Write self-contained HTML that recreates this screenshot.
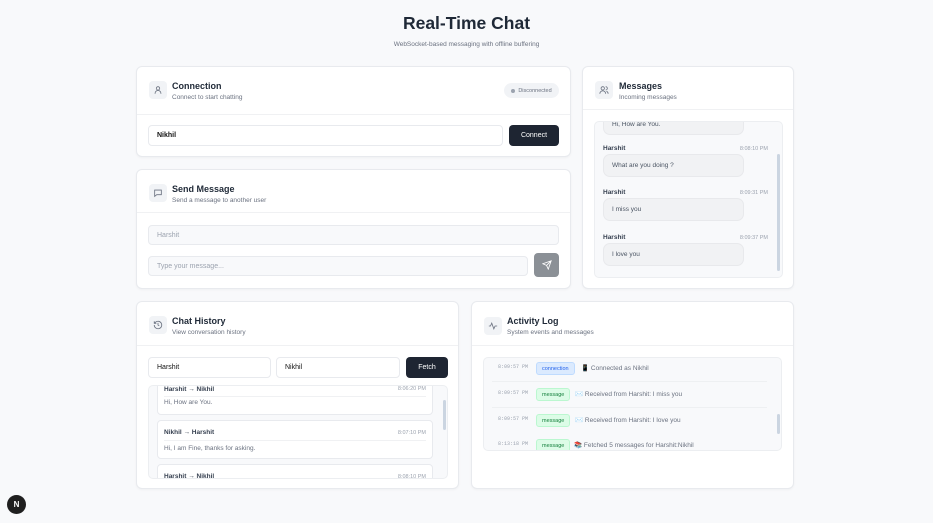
<!DOCTYPE html>
<html><head><meta charset="utf-8"><style>
*{box-sizing:border-box;margin:0;padding:0}
body{width:933px;height:523px;background:#f8f9fb;font-family:"Liberation Sans",sans-serif;color:#1f2937;position:relative;overflow:hidden}
.abs{position:absolute}
.card{position:absolute;background:#fff;border:1px solid #e8eaee;border-radius:6px;box-shadow:0 1px 2px rgba(0,0,0,.04)}
.ib{position:absolute;width:18px;height:18px;border-radius:4px;background:#f1f3f6;display:flex;align-items:center;justify-content:center}
.t{position:absolute;font-size:9px;font-weight:bold;color:#1f2937}
.s{position:absolute;font-size:6.5px;color:#6b7280}
.div{position:absolute;left:0;right:0;height:1px;background:#f0f1f3}
.in{position:absolute;border:1px solid #e8eaee;border-radius:4px;background:#fff;font-size:7px;padding-left:8px;display:flex;align-items:center;color:#111}
.btn{position:absolute;background:#1e2532;color:#fff;border-radius:4px;font-size:7px;display:flex;align-items:center;justify-content:center}
.bub{position:absolute;left:8px;width:141px;background:#f1f2f4;border:1px solid #e8e9ec;border-radius:7px;font-size:6.5px;color:#4b5563;padding-left:8px;display:flex;align-items:center}
.nm{position:absolute;left:8px;font-size:6.5px;font-weight:bold;color:#374151}
.tm{position:absolute;right:14px;font-size:5.5px;color:#9ca3af}
.hi{position:absolute;left:8px;width:276px;background:#fff;border:1px solid #e8eaee;border-radius:4px}
.hi .a{position:absolute;left:6px;top:5px;font-size:6.5px;font-weight:bold;color:#374151}
.hi .b{position:absolute;right:6px;top:5px;font-size:5.5px;color:#9ca3af}
.hi .c{position:absolute;left:6px;top:18px;font-size:6.5px;color:#6b7280}
.hi .l{position:absolute;left:6px;right:6px;top:15px;height:1px;background:#f0f1f3}
.lr{position:absolute;left:0;width:298px;height:25px}
.lr .tt{position:absolute;left:14px;top:5px;font-family:"Liberation Mono",monospace;font-size:5px;color:#9ca3af}
.lr .bd{position:absolute;left:52px;top:3px;height:13px;border-radius:3px;font-size:5.5px;display:flex;align-items:center;padding:0 5px}
.lr .tx{position:absolute;top:5px;font-size:6.5px;color:#6b7280}
.sb{position:absolute;width:3px;background:#cbd5e1;border-radius:2px}
</style></head><body>
<div class="abs" style="left:0;width:933px;top:13px;text-align:center;font-size:17.5px;font-weight:bold;color:#1f2937">Real-Time Chat</div>
<div class="abs" style="left:0;width:933px;top:41px;text-align:center;font-size:6.5px;color:#6b7280">WebSocket-based messaging with offline buffering</div>

<div class="card" style="left:136px;top:66px;width:435px;height:91px">
 <div class="ib" style="left:12px;top:14px"><svg width="10" height="10" viewBox="0 0 24 24" fill="none" stroke="#6b7280" stroke-width="2"><circle cx="12" cy="8" r="4"/><path d="M5 21v-1a7 7 0 0 1 14 0v1"/></svg></div>
 <div class="t" style="left:35px;top:14px">Connection</div>
 <div class="s" style="left:35px;top:27px">Connect to start chatting</div>
 <div class="abs" style="left:367px;top:16px;width:55px;height:15px;border-radius:8px;background:#f1f3f6;font-size:5.5px;color:#6b7280;display:flex;align-items:center;justify-content:center"><span style="width:4px;height:4px;border-radius:50%;background:#9ca3af;margin-right:3px"></span>Disconnected</div>
 <div class="div" style="top:47px"></div>
 <div class="in" style="left:11px;top:58px;width:355px;height:21px;font-weight:bold">Nikhil</div>
 <div class="btn" style="left:372px;top:58px;width:50px;height:21px">Connect</div>
</div>

<div class="card" style="left:136px;top:169px;width:435px;height:120px">
 <div class="ib" style="left:12px;top:14px"><svg width="10" height="10" viewBox="0 0 24 24" fill="none" stroke="#6b7280" stroke-width="2"><path d="M4 5h16v11H9l-5 4z"/></svg></div>
 <div class="t" style="left:35px;top:14px">Send Message</div>
 <div class="s" style="left:35px;top:27px">Send a message to another user</div>
 <div class="div" style="top:42px"></div>
 <div class="in" style="left:11px;top:55px;width:411px;height:20px;background:#f8f9fb;color:#9ca3af">Harshit</div>
 <div class="in" style="left:11px;top:86px;width:380px;height:20px;background:#f8f9fb;color:#9ca3af">Type your message...</div>
 <div class="btn" style="left:397px;top:83px;width:25px;height:24px;background:#8b9096"><svg width="10" height="10" viewBox="0 0 24 24" fill="none" stroke="#fff" stroke-width="2"><path d="M22 2 11 13M22 2l-7 20-4-9-9-4z"/></svg></div>
</div>

<div class="card" style="left:582px;top:66px;width:212px;height:223px">
 <div class="ib" style="left:12px;top:14px"><svg width="10" height="10" viewBox="0 0 24 24" fill="none" stroke="#6b7280" stroke-width="2"><circle cx="9" cy="8" r="4"/><path d="M2 21a7 7 0 0 1 14 0M16 4a4 4 0 0 1 0 8M22 21a7 7 0 0 0-4-6"/></svg></div>
 <div class="t" style="left:36px;top:14px">Messages</div>
 <div class="s" style="left:36px;top:27px">Incoming messages</div>
 <div class="div" style="top:42px"></div>
 <div class="abs" style="left:11px;top:54px;width:189px;height:157px;background:#f8f9fb;border:1px solid #eceef1;border-radius:5px;overflow:hidden">
  <div class="bub" style="top:-9px;height:22px">Hi, How are You.</div>
  <div class="nm" style="top:23px">Harshit</div><div class="tm" style="top:24px">8:08:10 PM</div>
  <div class="bub" style="top:32px;height:23px">What are you doing ?</div>
  <div class="nm" style="top:67px">Harshit</div><div class="tm" style="top:68px">8:09:31 PM</div>
  <div class="bub" style="top:76px;height:23px">I miss you</div>
  <div class="nm" style="top:112px">Harshit</div><div class="tm" style="top:113px">8:09:37 PM</div>
  <div class="bub" style="top:121px;height:23px">I love you</div>
  <div class="sb" style="left:182px;top:32px;height:117px"></div>
 </div>
</div>

<div class="card" style="left:136px;top:301px;width:323px;height:188px">
 <div class="ib" style="left:12px;top:14px"><svg width="10" height="10" viewBox="0 0 24 24" fill="none" stroke="#6b7280" stroke-width="2"><path d="M3 12a9 9 0 1 0 3-6.7L3 8M3 3v5h5M12 7v5l3 2"/></svg></div>
 <div class="t" style="left:35px;top:14px">Chat History</div>
 <div class="s" style="left:35px;top:27px">View conversation history</div>
 <div class="div" style="top:43px"></div>
 <div class="in" style="left:11px;top:55px;width:123px;height:21px">Harshit</div>
 <div class="in" style="left:139px;top:55px;width:124px;height:21px">Nikhil</div>
 <div class="btn" style="left:269px;top:55px;width:42px;height:21px">Fetch</div>
 <div class="abs" style="left:11px;top:83px;width:300px;height:94px;background:#f8f9fb;border:1px solid #eceef1;border-radius:5px;overflow:hidden">
  <div class="hi" style="top:-6px;height:35px"><div class="a">Harshit → Nikhil</div><div class="b">8:06:20 PM</div><div class="l"></div><div class="c">Hi, How are You.</div></div>
  <div class="hi" style="top:34px;height:39px"><div class="a" style="top:8px">Nikhil → Harshit</div><div class="b" style="top:9px">8:07:10 PM</div><div class="l" style="top:19px"></div><div class="c" style="top:24px">Hi, I am Fine, thanks for asking.</div></div>
  <div class="hi" style="top:78px;height:30px"><div class="a" style="top:8px">Harshit → Nikhil</div><div class="b" style="top:9px">8:08:10 PM</div></div>
  <div class="sb" style="left:294px;top:14px;height:30px"></div>
 </div>
</div>

<div class="card" style="left:471px;top:301px;width:323px;height:188px">
 <div class="ib" style="left:12px;top:15px"><svg width="10" height="10" viewBox="0 0 24 24" fill="none" stroke="#6b7280" stroke-width="2"><path d="M2 12h4l3-7 5 14 3-7h5"/></svg></div>
 <div class="t" style="left:35px;top:14px">Activity Log</div>
 <div class="s" style="left:35px;top:27px">System events and messages</div>
 <div class="div" style="top:43px"></div>
 <div class="abs" style="left:11px;top:55px;width:299px;height:94px;background:#f8f9fb;border:1px solid #eceef1;border-radius:5px;overflow:hidden">
  <div class="lr" style="top:1px"><div class="tt">8:09:57 PM</div><div class="bd" style="background:#dbeafe;color:#2563eb;border:1px solid #bfdbfe">connection</div><div class="tx" style="left:97px">📱 Connected as Nikhil</div></div>
  <div class="abs" style="left:8px;right:14px;top:23px;height:1px;background:#eef0f2"></div>
  <div class="lr" style="top:27px"><div class="tt">8:09:57 PM</div><div class="bd" style="background:#dcfce7;color:#15803d;border:1px solid #bbf7d0">message</div><div class="tx" style="left:91px">✉️ Received from Harshit: I miss you</div></div>
  <div class="abs" style="left:8px;right:14px;top:49px;height:1px;background:#eef0f2"></div>
  <div class="lr" style="top:53px"><div class="tt">8:09:57 PM</div><div class="bd" style="background:#dcfce7;color:#15803d;border:1px solid #bbf7d0">message</div><div class="tx" style="left:91px">✉️ Received from Harshit: I love you</div></div>
  <div class="lr" style="top:78px"><div class="tt">8:13:18 PM</div><div class="bd" style="background:#dcfce7;color:#15803d;border:1px solid #bbf7d0">message</div><div class="tx" style="left:90px">📚 Fetched 5 messages for Harshit:Nikhil</div></div>
  <div class="sb" style="left:293px;top:56px;height:20px"></div>
 </div>
</div>

<div class="abs" style="left:7px;top:495px;width:19px;height:19px;border-radius:50%;background:#1f1f1f;color:#fff;font-size:8px;font-weight:bold;display:flex;align-items:center;justify-content:center">N</div>
</body></html>
